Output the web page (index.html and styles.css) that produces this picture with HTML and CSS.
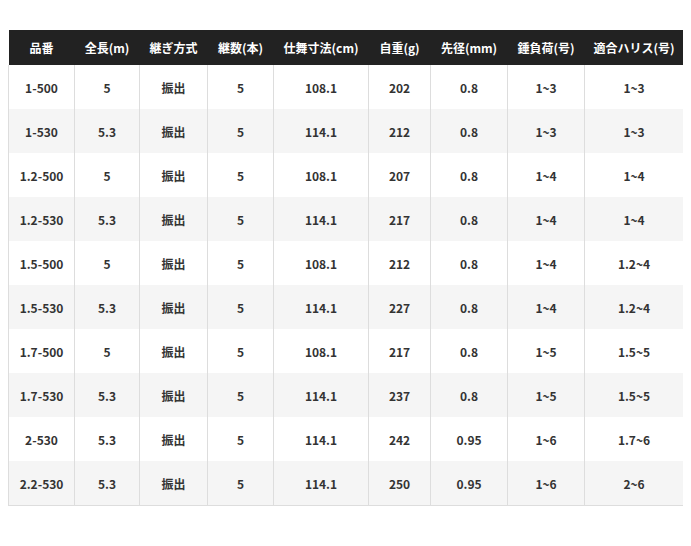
FILE: index.html
```html
<!DOCTYPE html>
<html lang="ja">
<head>
<meta charset="utf-8">
<link rel="stylesheet" href="styles.css">
</head>
<body>
<table class="spec">
<colgroup>
<col class="c1"><col class="c2"><col class="c3"><col class="c4"><col class="c5"><col class="c6"><col class="c7"><col class="c8"><col class="c9">
</colgroup>
<thead>
<tr><th>品番</th><th>全長(m)</th><th>継ぎ方式</th><th>継数(本)</th><th>仕舞寸法(cm)</th><th>自重(g)</th><th>先径(mm)</th><th>錘負荷(号)</th><th>適合ハリス(号)</th></tr>
</thead>
<tbody>
<tr><td>1-500</td><td>5</td><td>振出</td><td>5</td><td>108.1</td><td>202</td><td>0.8</td><td>1~3</td><td>1~3</td></tr>
<tr><td>1-530</td><td>5.3</td><td>振出</td><td>5</td><td>114.1</td><td>212</td><td>0.8</td><td>1~3</td><td>1~3</td></tr>
<tr><td>1.2-500</td><td>5</td><td>振出</td><td>5</td><td>108.1</td><td>207</td><td>0.8</td><td>1~4</td><td>1~4</td></tr>
<tr><td>1.2-530</td><td>5.3</td><td>振出</td><td>5</td><td>114.1</td><td>217</td><td>0.8</td><td>1~4</td><td>1~4</td></tr>
<tr><td>1.5-500</td><td>5</td><td>振出</td><td>5</td><td>108.1</td><td>212</td><td>0.8</td><td>1~4</td><td>1.2~4</td></tr>
<tr><td>1.5-530</td><td>5.3</td><td>振出</td><td>5</td><td>114.1</td><td>227</td><td>0.8</td><td>1~4</td><td>1.2~4</td></tr>
<tr><td>1.7-500</td><td>5</td><td>振出</td><td>5</td><td>108.1</td><td>217</td><td>0.8</td><td>1~5</td><td>1.5~5</td></tr>
<tr><td>1.7-530</td><td>5.3</td><td>振出</td><td>5</td><td>114.1</td><td>237</td><td>0.8</td><td>1~5</td><td>1.5~5</td></tr>
<tr><td>2-530</td><td>5.3</td><td>振出</td><td>5</td><td>114.1</td><td>242</td><td>0.95</td><td>1~6</td><td>1.7~6</td></tr>
<tr><td>2.2-530</td><td>5.3</td><td>振出</td><td>5</td><td>114.1</td><td>250</td><td>0.95</td><td>1~6</td><td>2~6</td></tr>
</tbody>
</table>
</body>
</html>
```
FILE: styles.css
```css
html, body { background: #fff; }
body {
  margin: 30px 8px 8px 8px;
  font-family: "Noto Sans CJK JP", "Noto Sans", sans-serif;
}
.spec {
  width: 675px;
  table-layout: fixed;
  border-collapse: collapse;
  font-size: 12px;
  font-weight: bold;
  color: #333;
  border-bottom: 1px solid #ddd;
}
.c1 { width: 66px; }
.c2 { width: 65px; }
.c3 { width: 68px; }
.c4 { width: 66px; }
.c5 { width: 95px; }
.c6 { width: 62px; }
.c7 { width: 77px; }
.c8 { width: 77px; }
.c9 { width: 99px; }
.spec th {
  background: #222;
  color: #fff;
  height: 35px;
  padding: 0;
  text-align: center;
  vertical-align: middle;
  border: none;
}
.spec td {
  height: 44px;
  padding: 0;
  text-align: center;
  vertical-align: middle;
  border-left: 1px solid #ddd;
  border-right: 1px solid #ddd;
}
.spec tbody tr:nth-child(even) td { background: #f5f5f5; }
```
